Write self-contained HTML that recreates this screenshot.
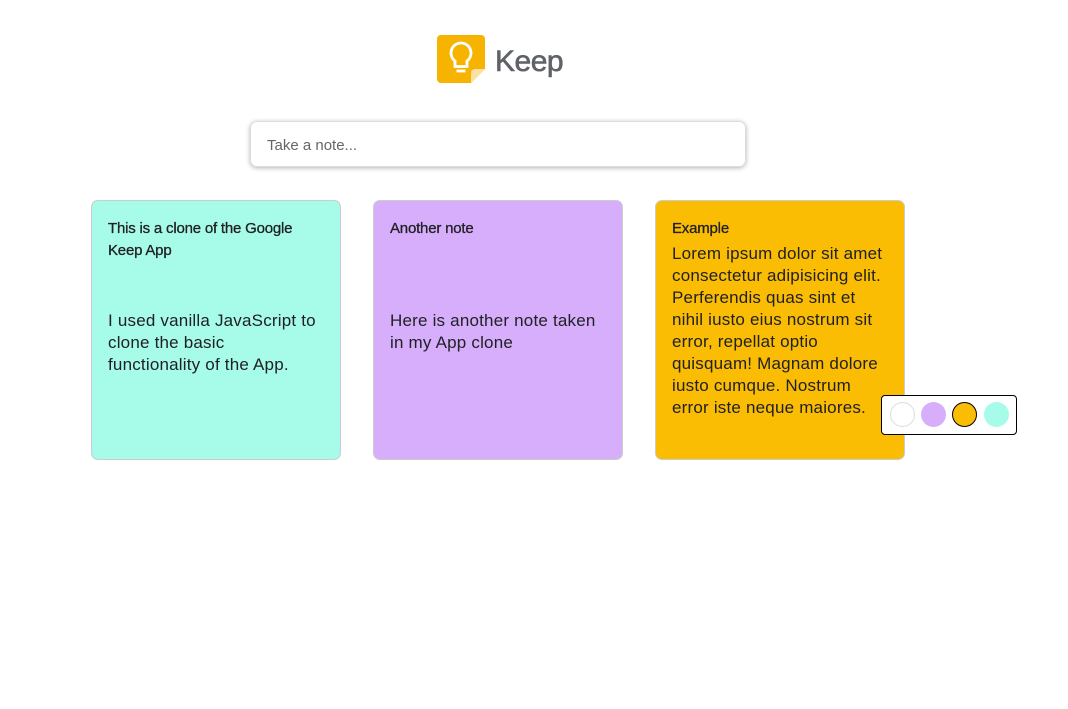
<!DOCTYPE html>
<html><head><style>
body{margin:0;background:#fff;font-family:"Liberation Sans",sans-serif;width:1068px;height:709px;position:relative;overflow:hidden}
.logo{position:absolute;left:437px;top:35px;width:48px;height:48px}
.kt{position:absolute;left:495px;top:45px;font-size:30px;color:#5f6368;letter-spacing:-0.5px;-webkit-text-stroke:.6px #5f6368}
.search{position:absolute;left:250px;top:121px;width:496px;height:46px;border:1px solid #ddd;border-radius:7px;box-shadow:0 1px 5px rgba(0,0,0,.3);box-sizing:border-box}
.search span{position:absolute;left:16px;top:15px;font-size:15px;color:#666}
.card{position:absolute;top:200px;width:250px;height:260px;border:1px solid #ccc;border-radius:7px;box-sizing:border-box;padding:17px 20px 17px 16px;color:#202124}
.card h3{margin:0;font-size:15px;font-weight:normal;line-height:22px;-webkit-text-stroke:.3px #202124;letter-spacing:-0.2px}
.card p{margin:0;font-size:17px;line-height:22px;letter-spacing:0.2px}
.pal{position:absolute;left:881px;top:395px;width:136px;height:40px;border:1px solid #000;border-radius:4px;box-sizing:border-box;background:#fff}
.c{position:absolute;top:6px;width:25px;height:25px;border-radius:50%;box-sizing:border-box}
</style></head><body>
<svg class="logo" viewBox="0 0 48 48">
<path d="M4 0h40a4 4 0 0 1 4 4v30l-14 14H4a4 4 0 0 1-4-4V4a4 4 0 0 1 4-4z" fill="#f6b400"/>
<path d="M48 34L34 48V38a4 4 0 0 1 4-4z" fill="#fbe2a0"/>
<path d="M24 8a10 10 0 0 0-6 18v5.5h12V26a10 10 0 0 0-6-18z" fill="none" stroke="#fff" stroke-width="2.8"/>
<path d="M19.5 36h9" stroke="#fff" stroke-width="2.8"/>
</svg>
<div class="kt">Keep</div>
<div class="search"><span>Take a note...</span></div>
<div class="card" style="left:91px;background:#a7fbe9"><h3>This is a clone of the Google Keep App</h3><p style="margin-top:48px">I used vanilla JavaScript to clone the basic functionality of the App.</p></div>
<div class="card" style="left:373px;background:#d7aefb"><h3>Another note</h3><p style="margin-top:70px">Here is another note taken in my App clone</p></div>
<div class="card" style="left:655px;background:#fbbc04"><h3>Example</h3><p style="margin-top:3px">Lorem ipsum dolor sit amet consectetur adipisicing elit. Perferendis quas sint et nihil iusto eius nostrum sit error, repellat optio quisquam! Magnam dolore iusto cumque. Nostrum error iste neque maiores.</p></div>
<div class="pal">
<div class="c" style="left:8px;border:1px solid #ddd;background:#fff"></div>
<div class="c" style="left:39px;background:#d7aefb"></div>
<div class="c" style="left:70px;background:#fbbc04;border:1px solid #000"></div>
<div class="c" style="left:102px;background:#a7fbe9"></div>
</div>
</body></html>
